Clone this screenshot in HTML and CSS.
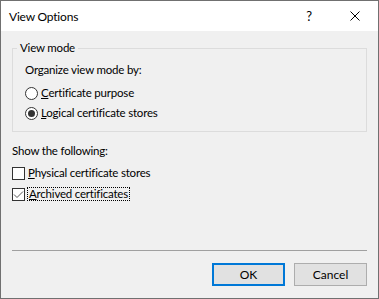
FILE: index.html
```html
<!DOCTYPE html>
<html>
<head>
<meta charset="utf-8">
<title>View Options</title>
<link rel="stylesheet" href="styles.css">
</head>
<body>
<div class="window">
  <div class="titlebar">
    <span class="title">View Options</span>
    <span class="cap-btn help">?</span>
    <span class="cap-btn close"><svg width="10" height="10" viewBox="0 0 10 10"><path d="M0.5 0.5L9.5 9.5M9.5 0.5L0.5 9.5" stroke="#000" stroke-width="1" fill="none"/></svg></span>
  </div>
  <div class="content">
    <fieldset class="group">
      <legend class="legend">View mode</legend>
      <div class="label org">Organize view mode by:</div>
      <div class="row rrow"><span class="radio"></span><span class="opt"><u>C</u>ertificate purpose</span></div>
      <div class="row rrow"><span class="radio checked"></span><span class="opt"><u>L</u>ogical certificate stores</span></div>
    </fieldset>
    <div class="label show">Show the following:</div>
    <div class="row"><span class="check"></span><span class="opt"><u>P</u>hysical certificate stores</span></div>
    <div class="row"><span class="check"><svg width="11" height="11" viewBox="0 0 11 11"><path d="M1 5.5L4 8.5L10 2.5" stroke="#555" stroke-width="1" fill="none"/></svg></span><span class="opt focus"><u>A</u>rchived certificates</span></div>
    <div class="spacer"></div>
    <div class="sep"></div>
    <div class="buttons">
      <button class="btn default">OK</button>
      <button class="btn">Cancel</button>
    </div>
  </div>
</div>
</body>
</html>
```
FILE: styles.css
```css
html, body {
  margin: 0;
  padding: 0;
  background: #ffffff;
}
body {
  font-family: "Segoe UI", Lato, "Noto Sans", sans-serif;
  font-size: 11.5px;
  letter-spacing: -0.2px;
  color: #000;
}
.window {
  width: 379px;
  height: 299px;
  box-sizing: border-box;
  border: 1px solid #707070;
  display: flex;
  flex-direction: column;
}
.titlebar {
  height: 30px;
  background: #fff;
  display: flex;
  align-items: center;
  flex: none;
}
.title {
  padding-left: 8px;
  flex: 1;
  font-size: 12px;
}
.cap-btn {
  width: 46px;
  height: 30px;
  display: flex;
  align-items: center;
  justify-content: center;
}
.help {
  font-size: 13px;
}
.content {
  flex: 1;
  background: #f0f0f0;
  padding: 9px 11px 12px 11px;
  display: flex;
  flex-direction: column;
}
.group {
  margin: 0;
  border: 1px solid #dcdcdc;
  padding: 0 12px 7.5px 12px;
  min-inline-size: 0;
}
.legend {
  padding: 0 3px;
  margin-left: -8px;
  line-height: 16px;
}
.label {
  height: 16px;
  line-height: 16px;
}
.org {
  margin-top: 6px;
  margin-bottom: 5.5px;
}
.show {
  margin-top: 10.5px;
  margin-bottom: 4.5px;
}
.row {
  height: 21px;
  display: flex;
  align-items: center;
}
.rrow {
  height: 20px;
}
.opt {
  padding-bottom: 2px;
}
.radio {
  width: 13px;
  height: 13px;
  box-sizing: border-box;
  border: 1px solid #333;
  border-radius: 50%;
  background: #fff;
  margin-right: 3px;
  display: flex;
  align-items: center;
  justify-content: center;
}
.radio.checked::after {
  content: "";
  width: 7px;
  height: 7px;
  border-radius: 50%;
  background: #333;
}
.check {
  width: 13px;
  height: 13px;
  box-sizing: border-box;
  border: 1px solid #333;
  background: #fff;
  margin-right: 3px;
  display: flex;
  align-items: center;
  justify-content: center;
}
.focus {
  outline: 1px dotted #000;
  padding: 0 1px;
  line-height: 12px;
  margin-bottom: 1px;
}
.spacer {
  flex: 1;
}
.sep {
  border-top: 1px solid #a0a0a0;
  margin-bottom: 12px;
}
.buttons {
  display: flex;
  justify-content: flex-end;
  gap: 9px;
}
.btn {
  width: 73px;
  height: 23px;
  box-sizing: border-box;
  background: #e1e1e1;
  border: 1px solid #adadad;
  font-family: inherit;
  font-size: 12px;
  color: #000;
  padding: 0;
  margin: 0;
}
.btn.default {
  border: 2px solid #0078d7;
}
```
